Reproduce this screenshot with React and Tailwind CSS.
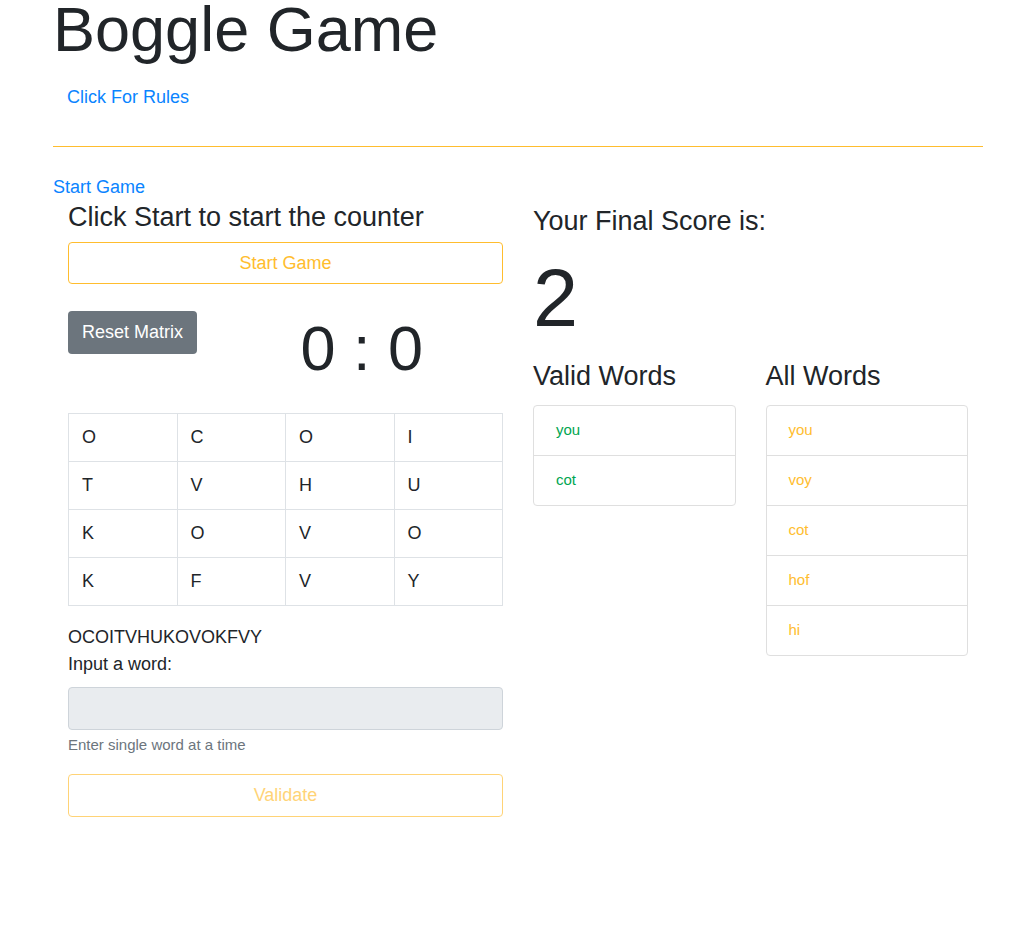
const matrix = [
  ['O', 'C', 'O', 'I'],
  ['T', 'V', 'H', 'U'],
  ['K', 'O', 'V', 'O'],
  ['K', 'F', 'V', 'Y'],
];

const validWords = ['you', 'cot'];
const allWords = ['you', 'voy', 'cot', 'hof', 'hi'];

const heading = 'text-[27px] leading-8';
const outlineButton =
  'block w-full rounded border border-[#ffbd2e] text-center text-lg leading-[27px] text-[#ffbd2e]';

function WordList({ title, words, color }) {
  return (
    <section>
      <h2 className={heading}>{title}</h2>
      <ul className="mt-[13px] divide-y divide-[#dfdfdf] rounded border border-[#dfdfdf]">
        {words.map((word) => (
          <li key={word} className={`px-[22px] pt-3 pb-[14px] text-[15px] leading-[23px] ${color}`}>
            {word}
          </li>
        ))}
      </ul>
    </section>
  );
}

export default function App() {
  return (
    <main className="pr-[31px] pb-[109px] pl-[53px] font-['Liberation_Sans',Arial,sans-serif] text-lg leading-[27px] text-[#212529]">
      <h1 className="text-[63px] leading-[58px]">Boggle Game</h1>
      <button type="button" className="mt-[18px] h-[43px] px-[14px] text-[#0a84ff]">
        Click For Rules
      </button>
      <hr className="my-[27px] border-[#ffbd2e]" />
      <a href="#game" className="block w-fit text-[#0a84ff]">
        Start Game
      </a>

      <div id="game" className="grid grid-cols-2 gap-[30px] px-[15px]">
        <div>
          <h2 className={heading}>Click Start to start the counter</h2>
          <button type="button" className={`mt-[9px] h-[42px] ${outlineButton}`}>
            Start Game
          </button>

          <div className="mt-[27px] grid grid-cols-2 items-start gap-[30px]">
            <div>
              <button type="button" className="h-[43px] rounded bg-[#6c757d] px-[14px] text-white">
                Reset Matrix
              </button>
            </div>
            <p className="text-[63px] leading-[74px] whitespace-nowrap">0 : 0</p>
          </div>

          <table className="mt-7 w-full table-fixed border-collapse">
            <tbody>
              {matrix.map((row, r) => (
                <tr key={r}>
                  {row.map((letter, c) => (
                    <td key={c} className="h-12 border border-[#dee2e6] px-[13px]">
                      {letter}
                    </td>
                  ))}
                </tr>
              ))}
            </tbody>
          </table>

          <p className="mt-[18px]">{matrix.flat().join('')}</p>
          <form>
            <label htmlFor="word" className="block">
              Input a word:
            </label>
            <input
              id="word"
              type="text"
              disabled
              aria-describedby="word-help"
              className="mt-[9px] block h-[43px] w-full rounded border border-[#ced4da] bg-[#e9ecef] px-[14px]"
            />
            <p id="word-help" className="mt-1 text-[15px] leading-[22px] text-[#6c757d]">
              Enter single word at a time
            </p>
            <button type="submit" disabled className={`mt-[18px] h-[43px] opacity-65 ${outlineButton}`}>
              Validate
            </button>
          </form>
        </div>

        <div className="pt-1">
          <h2 className={heading}>Your Final Score is:</h2>
          <p className="my-[13px] text-[81px] leading-[97px]">2</p>
          <div className="grid grid-cols-2 items-start gap-[30px]">
            <WordList title="Valid Words" words={validWords} color="text-[#00a550]" />
            <WordList title="All Words" words={allWords} color="text-[#ffbd2e]" />
          </div>
        </div>
      </div>
    </main>
  );
}
